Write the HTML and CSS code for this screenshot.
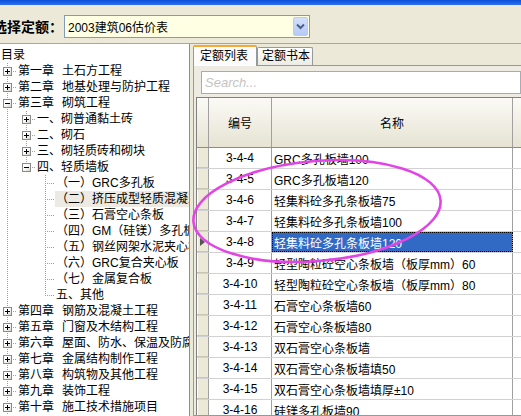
FILE: index.html
```html
<!DOCTYPE html>
<html lang="zh">
<head>
<meta charset="utf-8">
<title>定额</title>
<link rel="stylesheet" href="styles.css">
</head>
<body>
<div class="app">
  <div class="titlebar"></div>
  <div class="toolbar">
    <span class="label">选择定额：</span>
    <div class="combo">
      <span class="combo-text">2003建筑06估价表</span>
      <span class="combo-btn"><svg width="9" height="7" viewBox="0 0 9 7"><path d="M1 1.5 L4.5 5 L8 1.5" fill="none" stroke="#4D6185" stroke-width="2"/></svg></span>
    </div>
  </div>
  <div class="sep"></div>
  <div class="main">
    <div class="tree">
      <div class="row"><span class="txt">目录</span></div>
      <div class="row"><span class="g t"><span class="box plus"></span></span><span class="txt">第一章<span class="gap"></span>土石方工程</span></div>
      <div class="row"><span class="g t"><span class="box plus"></span></span><span class="txt">第二章<span class="gap"></span>地基处理与防护工程</span></div>
      <div class="row"><span class="g t"><span class="box minus"></span></span><span class="txt">第三章<span class="gap"></span>砌筑工程</span></div>
      <div class="row"><span class="g v"></span><span class="g t"><span class="box plus"></span></span><span class="txt">一、砌普通黏土砖</span></div>
      <div class="row"><span class="g v"></span><span class="g t"><span class="box plus"></span></span><span class="txt">二、砌石</span></div>
      <div class="row"><span class="g v"></span><span class="g t"><span class="box plus"></span></span><span class="txt">三、砌轻质砖和砌块</span></div>
      <div class="row"><span class="g v"></span><span class="g l"><span class="box minus"></span></span><span class="txt">四、轻质墙板</span></div>
      <div class="row"><span class="g v"></span><span class="g"></span><span class="g t"></span><span class="txt">（一）GRC多孔板</span></div>
      <div class="row"><span class="g v"></span><span class="g"></span><span class="g t"></span><span class="txt hl">（二）挤压成型轻质混凝土板</span></div>
      <div class="row"><span class="g v"></span><span class="g"></span><span class="g t"></span><span class="txt">（三）石膏空心条板</span></div>
      <div class="row"><span class="g v"></span><span class="g"></span><span class="g t"></span><span class="txt">（四）GM（硅镁）多孔板</span></div>
      <div class="row"><span class="g v"></span><span class="g"></span><span class="g t"></span><span class="txt">（五）钢丝网架水泥夹心板</span></div>
      <div class="row"><span class="g v"></span><span class="g"></span><span class="g t"></span><span class="txt">（六）GRC复合夹心板</span></div>
      <div class="row"><span class="g v"></span><span class="g"></span><span class="g t"></span><span class="txt">（七）金属复合板</span></div>
      <div class="row"><span class="g v"></span><span class="g"></span><span class="g l"></span><span class="txt">五、其他</span></div>
      <div class="row"><span class="g t"><span class="box plus"></span></span><span class="txt">第四章<span class="gap"></span>钢筋及混凝土工程</span></div>
      <div class="row"><span class="g t"><span class="box plus"></span></span><span class="txt">第五章<span class="gap"></span>门窗及木结构工程</span></div>
      <div class="row"><span class="g t"><span class="box plus"></span></span><span class="txt">第六章<span class="gap"></span>屋面、防水、保温及防腐工程</span></div>
      <div class="row"><span class="g t"><span class="box plus"></span></span><span class="txt">第七章<span class="gap"></span>金属结构制作工程</span></div>
      <div class="row"><span class="g t"><span class="box plus"></span></span><span class="txt">第八章<span class="gap"></span>构筑物及其他工程</span></div>
      <div class="row"><span class="g t"><span class="box plus"></span></span><span class="txt">第九章<span class="gap"></span>装饰工程</span></div>
      <div class="row"><span class="g t"><span class="box plus"></span></span><span class="txt">第十章<span class="gap"></span>施工技术措施项目</span></div>
    </div>
    <div class="splitter"></div>
    <div class="tabctl">
      <div class="tabstrip">
        <div class="tab active">定额列表</div>
        <div class="tab">定额书本</div>
      </div>
      <div class="page">
        <div class="search">Search...</div>
        <div class="grid">
          <div class="grow ghead"><div class="rh"></div><div class="c1">编号</div><div class="c2 center">名称</div><div class="c3"></div></div>
          <div class="grow"><div class="rh"></div><div class="c1">3-4-4</div><div class="c2">GRC多孔板墙100</div><div class="c3"></div></div>
          <div class="grow"><div class="rh"></div><div class="c1">3-4-5</div><div class="c2">GRC多孔板墙120</div><div class="c3"></div></div>
          <div class="grow"><div class="rh"></div><div class="c1">3-4-6</div><div class="c2">轻集料砼多孔条板墙75</div><div class="c3"></div></div>
          <div class="grow"><div class="rh"></div><div class="c1">3-4-7</div><div class="c2">轻集料砼多孔条板墙100</div><div class="c3"></div></div>
          <div class="grow"><div class="rh"><span class="arrow"></span></div><div class="c1">3-4-8</div><div class="c2 sel">轻集料砼多孔条板墙120</div><div class="c3"></div></div>
          <div class="grow"><div class="rh"></div><div class="c1">3-4-9</div><div class="c2">轻型陶粒砼空心条板墙（板厚mm）60</div><div class="c3"></div></div>
          <div class="grow"><div class="rh"></div><div class="c1">3-4-10</div><div class="c2">轻型陶粒砼空心条板墙（板厚mm）80</div><div class="c3"></div></div>
          <div class="grow"><div class="rh"></div><div class="c1">3-4-11</div><div class="c2">石膏空心条板墙60</div><div class="c3"></div></div>
          <div class="grow"><div class="rh"></div><div class="c1">3-4-12</div><div class="c2">石膏空心条板墙80</div><div class="c3"></div></div>
          <div class="grow"><div class="rh"></div><div class="c1">3-4-13</div><div class="c2">双石膏空心条板墙</div><div class="c3"></div></div>
          <div class="grow"><div class="rh"></div><div class="c1">3-4-14</div><div class="c2">双石膏空心条板墙填50</div><div class="c3"></div></div>
          <div class="grow"><div class="rh"></div><div class="c1">3-4-15</div><div class="c2">双石膏空心条板墙填厚±10</div><div class="c3"></div></div>
          <div class="grow"><div class="rh"></div><div class="c1">3-4-16</div><div class="c2">硅镁多孔板墙90</div><div class="c3"></div></div>
        </div>
      </div>
    </div>
  </div>
  <svg class="annot" width="521" height="416" viewBox="0 0 521 416">
    <ellipse cx="317" cy="211" rx="124" ry="50" transform="rotate(-5 317 211)" fill="none" stroke="#E244E6" stroke-width="2.6"/>
  </svg>
</div>
</body>
</html>
```

FILE: styles.css
```css
* { box-sizing: border-box; }
body {
  margin: 0;
  background: #ECE9D8;
  font: 12px "Liberation Sans", "Noto Sans CJK SC", sans-serif;
  color: #000;
  overflow: hidden;
}
.app {
  position: relative;
  width: 521px;
  height: 416px;
  overflow: hidden;
  display: flex;
  flex-direction: column;
}
.titlebar {
  flex: none;
  height: 5px;
  background: linear-gradient(#0A4FD6, #2D72EE);
}
.toolbar {
  flex: none;
  height: 38px;
  padding-top: 4px;
  display: flex;
  align-items: center;
}
.label {
  flex: none;
  font-family: "Noto Sans CJK SC", sans-serif;
  font-weight: bold;
  font-size: 14px;
  margin-left: -7px;
  width: 71px;
  white-space: nowrap;
}
.combo {
  flex: none;
  width: 246px;
  height: 23px;
  border: 1px solid #7F9DB9;
  background: #FFFFE3;
  display: flex;
  align-items: center;
}
.combo-text { flex: 1; padding-left: 3px; white-space: nowrap; }
.combo-btn {
  flex: none;
  width: 15px;
  height: 19px;
  margin-right: 1px;
  border: 1px solid #B9CCF5;
  border-radius: 2px;
  background: linear-gradient(#D3E0FD, #B6CAF7);
  display: flex;
  align-items: center;
  justify-content: center;
}
.sep { flex: none; height: 1px; background: #ACA899; }
.main { flex: 1; min-height: 0; display: flex; }

/* tree */
.tree {
  flex: none;
  width: 190px;
  background: #fff;
  border-right: 1px solid #8E8F8F;
  padding-top: 3px;
  overflow: hidden;
  white-space: nowrap;
}
.row { height: 16px; display: flex; align-items: center; line-height: 16px; }
.row .g:first-child { margin-left: -2px; }
.g {
  flex: none;
  width: 19px;
  height: 16px;
  display: flex;
  align-items: flex-start;
}
.g.v {
  background: repeating-linear-gradient(to bottom, #A0A0A0 0 1px, transparent 1px 2px) 9px 0 / 1px 16px no-repeat;
}
.g.t {
  background:
    repeating-linear-gradient(to bottom, #A0A0A0 0 1px, transparent 1px 2px) 9px 0 / 1px 16px no-repeat,
    repeating-linear-gradient(to right, #A0A0A0 0 1px, transparent 1px 2px) 9px 8px / 10px 1px no-repeat;
}
.g.l {
  background:
    repeating-linear-gradient(to bottom, #A0A0A0 0 1px, transparent 1px 2px) 9px 0 / 1px 8px no-repeat,
    repeating-linear-gradient(to right, #A0A0A0 0 1px, transparent 1px 2px) 9px 8px / 10px 1px no-repeat;
}
.box {
  width: 9px;
  height: 9px;
  margin: 4px 0 0 5px;
  border: 1px solid #8A8A8A;
}
.box.plus {
  background:
    linear-gradient(#000, #000) center / 5px 1px no-repeat,
    linear-gradient(#000, #000) center / 1px 5px no-repeat,
    linear-gradient(135deg, #fff 40%, #D8D6CC);
}
.box.minus {
  background:
    linear-gradient(#000, #000) center / 5px 1px no-repeat,
    linear-gradient(135deg, #fff 40%, #D8D6CC);
}
.txt { padding-left: 1px; flex: none; }
.txt.hl { background: #ECEAE2; padding-right: 4px; }
.gap { display: inline-block; width: 8px; }

.splitter { flex: none; width: 3px; }

/* tabs */
.tabctl { flex: 1; min-width: 0; display: flex; flex-direction: column; }
.tabstrip {
  flex: none;
  height: 21px;
  padding-top: 1px;
  display: flex;
  align-items: flex-end;
}
.tab {
  flex: none;
  height: 18px;
  width: 56px;
  padding-left: 4px;
  border: 1px solid #919B9C;
  border-bottom: none;
  border-radius: 2px 2px 0 0;
  background: linear-gradient(#FFFFFF, #ECEBE5);
  line-height: 17px;
  white-space: nowrap;
}
.tab.active {
  position: relative;
  z-index: 1;
  height: 21px;
  width: 64px;
  padding-left: 6px;
  margin-bottom: -1px;
  border-top: 2px solid #F4A93A;
  background: #FCFCFE;
  line-height: 18px;
}
.page {
  flex: 1;
  min-height: 0;
  border: 1px solid #919B9C;
  border-right: none;
  background: #EEECE2;
  padding: 5px 0 0 2px;
  overflow: hidden;
}
.search {
  margin-left: 5px;
  height: 23px;
  border: 1px solid #A5ACB2;
  background: #fff;
  color: #C4C4C4;
  font-style: italic;
  font-size: 13px;
  line-height: 21px;
  padding-left: 3px;
}
.grid {
  margin-top: 3px;
  width: 420px;
  border-top: 1px solid #808080;
  border-left: 1px solid #808080;
  background: #fff;
}
.grow {
  display: flex;
  height: 21px;
  border-bottom: 1px solid #D2D2D2;
}
.grow > div {
  display: flex;
  align-items: center;
  white-space: nowrap;
  overflow: hidden;
}
.rh {
  flex: none;
  width: 12px;
  border-right: 1px solid #A0A0A0;
  background: linear-gradient(to right, #FFFFFF 0 1px, #ECE9D8 1px);
  box-shadow: inset 0 -1px 0 #C9C6B6;
}
.c1 {
  flex: none;
  width: 63px;
  justify-content: center;
  border-right: 1px solid #A0A0A0;
}
.c2 {
  flex: none;
  width: 241px;
  padding-left: 2px;
  border-right: 1px solid #A0A0A0;
}
.c2.center { justify-content: center; padding-left: 0; }
.c3 { flex: 1; }
.ghead {
  height: 50px;
  border-bottom: 1px solid #8C8C8C;
  background: linear-gradient(#FBFAF6, #E6E3D3);
}
.ghead .rh { background: transparent; box-shadow: none; }
.sel {
  background: #316AC5;
  color: #fff;
  outline: 1px dotted #000;
  outline-offset: -1px;
}
.arrow {
  width: 0;
  height: 0;
  margin-left: 3px;
  border-left: 5px solid #555;
  border-top: 4px solid transparent;
  border-bottom: 4px solid transparent;
}
.annot {
  position: absolute;
  left: 0;
  top: 0;
  pointer-events: none;
}
```
